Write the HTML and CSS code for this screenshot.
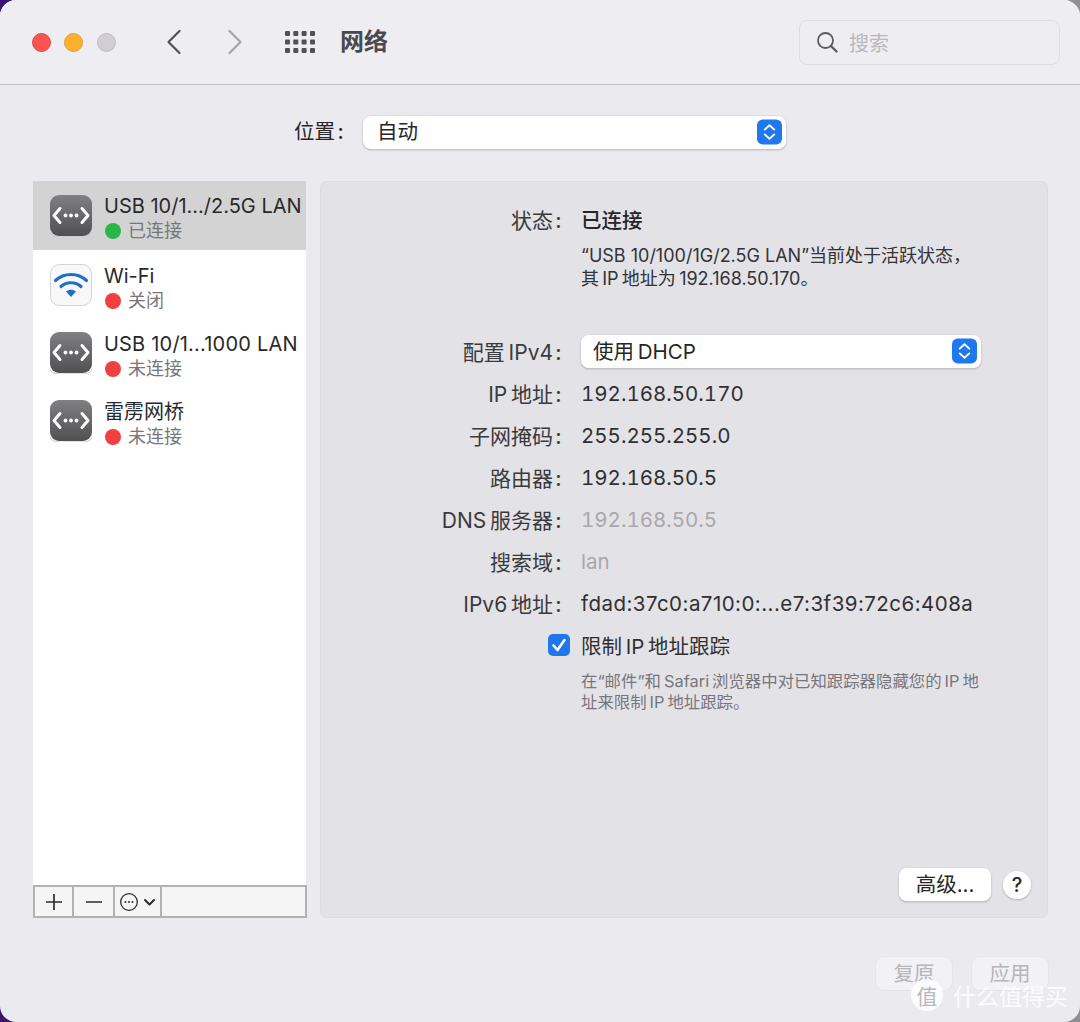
FILE: index.html
```html
<!DOCTYPE html>
<html lang="zh-CN">
<head>
<meta charset="utf-8">
<title>网络</title>
<link rel="stylesheet" href="styles.css">
</head>
<body>
<svg class="defs" width="0" height="0" aria-hidden="true">
  <defs>
    <linearGradient id="netgrad" x1="0" y1="0" x2="0" y2="1"><stop offset="0" stop-color="#808083"/><stop offset="1" stop-color="#505053"/></linearGradient>
    <symbol id="net" viewBox="0 0 42 42">
      <rect x="0" y="0" width="42" height="41" rx="9" fill="url(#netgrad)"/>
      <path d="M0 37a9 5 0 0 0 9 5h24a9 5 0 0 0 9-5" fill="none" stroke="#c9c9cb" stroke-width="1"/>
      <path d="M10 13.500 4 20.500 10 27.500M32 13.500 38 20.500 32 27.500" fill="none" stroke="#fff" stroke-width="3" stroke-linecap="round" stroke-linejoin="round"/>
      <circle cx="15.500" cy="20.500" r="1.900" fill="#fff"/><circle cx="21" cy="20.500" r="1.900" fill="#fff"/><circle cx="26.500" cy="20.500" r="1.900" fill="#fff"/>
    </symbol>
    <symbol id="stepper" viewBox="0 0 26 26">
      <rect width="26" height="26" rx="6" fill="#1f78ee"/>
      <path d="M8 10.500 13 6l5 4.500M8 15.500l5 4.500 5-4.500" fill="none" stroke="#fff" stroke-width="2" stroke-linecap="round" stroke-linejoin="round"/>
    </symbol>
  </defs>
</svg>
<main class="window">
  <header class="toolbar">
    <div class="lights"><span class="light red"></span><span class="light amber"></span><span class="light grey"></span></div>
    <svg class="nav back" width="16" height="26" viewBox="0 0 16 26"><path d="M13.500 2 2.500 13l11 11" fill="none" stroke="#515155" stroke-width="2.200" stroke-linecap="round" stroke-linejoin="round"/></svg>
    <svg class="nav forward" width="16" height="26" viewBox="0 0 16 26"><path d="M2.500 2l11 11-11 11" fill="none" stroke="#a5a5a9" stroke-width="2.200" stroke-linecap="round" stroke-linejoin="round"/></svg>
    <svg class="grid-icon" width="30" height="22" viewBox="0 0 30 22" fill="#505055">
      <rect x="0" y="0" width="5" height="5" rx="1"/><rect x="8.300" y="0" width="5" height="5" rx="1"/><rect x="16.600" y="0" width="5" height="5" rx="1"/><rect x="25" y="0" width="5" height="5" rx="1"/>
      <rect x="0" y="8.500" width="5" height="5" rx="1"/><rect x="8.300" y="8.500" width="5" height="5" rx="1"/><rect x="16.600" y="8.500" width="5" height="5" rx="1"/><rect x="25" y="8.500" width="5" height="5" rx="1"/>
      <rect x="0" y="17" width="5" height="5" rx="1"/><rect x="8.300" y="17" width="5" height="5" rx="1"/><rect x="16.600" y="17" width="5" height="5" rx="1"/><rect x="25" y="17" width="5" height="5" rx="1"/>
    </svg>
    <h1 class="title">网络</h1>
    <div class="search">
      <svg width="22" height="22" viewBox="0 0 22 22"><circle cx="9.500" cy="9.500" r="7.500" fill="none" stroke="#5c5c60" stroke-width="1.800"/><path d="M15 15l5.500 5.500" stroke="#5c5c60" stroke-width="2.400" stroke-linecap="round"/></svg>
      <span>搜索</span>
    </div>
  </header>

  <div class="location">
    <span class="location-label">位置<span class="colon">:</span></span>
    <div class="select location-select"><span class="select-text">自动</span><svg class="stepper"><use href="#stepper"/></svg></div>
  </div>

  <div class="columns">
    <aside class="sidebar">
      <ul class="services">
        <li class="service active">
          <svg class="service-icon"><use href="#net"/></svg>
          <div class="service-text"><div class="service-name">USB 10/1.../2.5G LAN</div><div class="service-status"><i class="dot green"></i>已连接</div></div>
        </li>
        <li class="service">
          <svg class="service-icon" viewBox="0 0 42 42">
            <rect x=".5" y=".5" width="41" height="41" rx="9" fill="#f8f8f9" stroke="#d4d4d6"/>
            <path d="M5.500 16.500C14 8.500 28 8.500 36.500 16.500" fill="none" stroke="#1f6fc9" stroke-width="3.200" stroke-linecap="round"/>
            <path d="M11 22.500c5.500-5 14.500-5 20 0" fill="none" stroke="#1f6fc9" stroke-width="3.200" stroke-linecap="round"/>
            <path d="M16 27.500c3-2.500 7-2.500 10 0L21 33z" fill="#1f6fc9"/>
          </svg>
          <div class="service-text"><div class="service-name">Wi-Fi</div><div class="service-status"><i class="dot red-dot"></i>关闭</div></div>
        </li>
        <li class="service">
          <svg class="service-icon"><use href="#net"/></svg>
          <div class="service-text"><div class="service-name name-wide">USB 10/1...1000 LAN</div><div class="service-status"><i class="dot red-dot"></i>未连接</div></div>
        </li>
        <li class="service">
          <svg class="service-icon"><use href="#net"/></svg>
          <div class="service-text"><div class="service-name">雷雳网桥</div><div class="service-status"><i class="dot red-dot"></i>未连接</div></div>
        </li>
      </ul>
      <div class="list-bar">
        <button class="bar-btn plus"><svg width="18" height="18" viewBox="0 0 18 18"><path d="M9 1v16M1 9h16" stroke="#2b2b2d" stroke-width="1.700"/></svg></button>
        <button class="bar-btn minus"><svg width="18" height="18" viewBox="0 0 18 18"><path d="M1 9h16" stroke="#2b2b2d" stroke-width="1.700"/></svg></button>
        <button class="bar-btn more"><svg width="38" height="20" viewBox="0 0 38 20"><circle cx="10" cy="10" r="8.300" fill="none" stroke="#2b2b2d" stroke-width="1.300"/><circle cx="6.500" cy="10" r="1" fill="#2b2b2d"/><circle cx="10" cy="10" r="1" fill="#2b2b2d"/><circle cx="13.500" cy="10" r="1" fill="#2b2b2d"/><path d="M26 8l4.500 4.500L35 8" fill="none" stroke="#2b2b2d" stroke-width="2" stroke-linecap="round" stroke-linejoin="round"/></svg></button>
        <div class="bar-fill"></div>
      </div>
    </aside>

    <section class="panel">
      <div class="status-row">
        <div class="label">状态<span class="colon">:</span></div>
        <div class="status-value">已连接</div>
      </div>
      <p class="status-desc">“USB 10/100/1G/2.5G LAN”当前处于活跃状态，<br>其&#8201;IP&#8201;地址为&#8201;192.168.50.170。</p>
      <div class="fields">
        <div class="label">配置&#8201;IPv4<span class="colon">:</span></div>
        <div class="select ipv4-select"><span class="select-text">使用&#8201;DHCP</span><svg class="stepper"><use href="#stepper"/></svg></div>
        <div class="label">IP&#8201;地址<span class="colon">:</span></div><div class="value num">192.168.50.170</div>
        <div class="label">子网掩码<span class="colon">:</span></div><div class="value num">255.255.255.0</div>
        <div class="label">路由器<span class="colon">:</span></div><div class="value num">192.168.50.5</div>
        <div class="label">DNS&#8201;服务器<span class="colon">:</span></div><div class="value num muted">192.168.50.5</div>
        <div class="label">搜索域<span class="colon">:</span></div><div class="value muted">lan</div>
        <div class="label">IPv6&#8201;地址<span class="colon">:</span></div><div class="value addr">fdad:37c0:a710:0:...e7:3f39:72c6:408a</div>
        <div class="check-cell"><span class="checkbox"><svg width="22" height="22" viewBox="0 0 22 22"><path d="M5.500 11.500 9.500 16 16.500 6" fill="none" stroke="#fff" stroke-width="2.600" stroke-linecap="round" stroke-linejoin="round"/></svg></span></div>
        <div class="value">限制&#8201;IP&#8201;地址跟踪</div>
      </div>
      <p class="note">在“邮件”和&#8201;Safari&#8201;浏览器中对已知跟踪器隐藏您的&#8201;IP&#8201;地址来限制&#8201;IP&#8201;地址跟踪。</p>
      <div class="panel-actions">
        <button class="btn advanced">高级...</button>
        <button class="help">?</button>
      </div>
    </section>
  </div>

  <footer class="footer">
    <button class="btn disabled">复原</button>
    <button class="btn disabled">应用</button>
  </footer>

  <div class="watermark"><span class="wm-badge">值</span><span>什么值得买</span></div>
</main>
</body>
</html>
```
FILE: styles.css
```css
* { box-sizing: border-box; }
html, body { margin: 0; height: 100%; }
body {
  background: linear-gradient(90deg, #3a1470 0 50%, #8f8f94 50%);
  font-family: "Inter", "Noto Sans CJK SC", sans-serif;
  color: #262628;
  overflow: hidden;
}
.defs { position: absolute; }
.window {
  position: relative;
  width: 1080px;
  height: 1022px;
  background: #ebeaef;
  border-radius: 16px;
  display: flex;
  flex-direction: column;
  overflow: hidden;
}
.toolbar {
  height: 85px;
  flex: none;
  display: flex;
  align-items: center;
  background: #eeedf2;
  border-bottom: 1px solid #c5c3c9;
  padding: 0 20px 0 32px;
}
.lights { display: flex; gap: 13px; }
.light { width: 19px; height: 19px; border-radius: 50%; display: block; }
.grey { margin-left: 1px; }
.red { background: #fb5350; border: 1px solid #e0443f; }
.amber { background: #fdb02e; border: 1px solid #e29b2c; }
.grey { background: #d0ced4; border: 1px solid #bdbbc2; }
.nav { flex: none; }
.back { margin-left: 50px; }
.forward { margin-left: 45px; }
.grid-icon { margin-left: 42px; flex: none; }
.title { margin: 0 0 0 25px; font-size: 24px; font-weight: 700; color: #4a4a4e; line-height: 1; }
.search {
  margin-left: auto;
  width: 261px;
  height: 45px;
  border: 1px solid #dfdde3;
  border-radius: 8px;
  display: flex;
  align-items: center;
  gap: 11px;
  padding-left: 16px;
  color: #b9b8bd;
  font-size: 20px;
}
.location {
  flex: none;
  height: 96px;
  display: flex;
  align-items: center;
  padding: 0 0 2px 294px;
}
.location-label { width: 69px; font-size: 20.500px; line-height: 26px; white-space: nowrap; }
.colon { display: inline-block; width: 11px; text-align: center; font-weight: 500; }
.select {
  display: flex;
  align-items: center;
  justify-content: space-between;
  background: #fff;
  border-radius: 8px;
  box-shadow: 0 0 0 .5px #d6d5da, 0 1px 2px rgba(0,0,0,.3);
  font-size: 20.500px;
  height: 33px;
  padding: 0 4px 0 14px;
}
.select-text { line-height: 26px; margin-bottom: 1px; }
.location-select { width: 423px; }
.ipv4-select { height: 33px; padding-left: 12px; }
.ipv4-select .select-text { margin-bottom: -1px; }
.stepper { width: 25px; height: 26px; flex: none; }
.columns {
  flex: none;
  display: flex;
  height: 737px;
  padding: 0 32px 0 33px;
  gap: 14px;
}
.sidebar {
  width: 273px;
  flex: none;
  display: flex;
  flex-direction: column;
  background: #fff;
}
.services { list-style: none; margin: 0; padding: 0; flex: 1; }
.service {
  height: 68px;
  display: flex;
  align-items: center;
  gap: 12px;
  padding-left: 17px;
}
.service.active { background: #d3d3d4; height: 69px; margin-bottom: 1px; }
.service-icon { width: 42px; height: 42px; flex: none; }
.service-text { min-width: 0; padding-top: 6px; }
.service-name { font-size: 20px; line-height: 25px; white-space: nowrap; color: #29292b; }
.name-wide { letter-spacing: .2px; }
.service-status { font-size: 18px; line-height: 24px; color: #77767b; display: flex; align-items: center; gap: 7px; }
.dot { width: 16px; height: 16px; border-radius: 50%; display: block; flex: none; margin-left: 1px; }
.green { background: #2ab644; }
.red-dot { background: #f04040; }
.list-bar {
  flex: none;
  height: 33px;
  display: flex;
  background: #f5f5f6;
  border: 2px solid #b2b2b4;
  margin: 0 -1px 0 0;
}
.bar-btn {
  background: none;
  border: 0;
  border-right: 2px solid #b2b2b4;
  padding: 0;
  display: flex;
  align-items: center;
  justify-content: center;
}
.plus { width: 39px; }
.minus { width: 41px; }
.more { width: 47px; }
.bar-fill { flex: 1; }
.panel {
  position: relative;
  flex: 1;
  background: #e3e2e7;
  border: 1px solid #dddce1;
  border-radius: 7px;
  padding-top: 24px;
  display: flex;
  flex-direction: column;
}
.label { font-size: 21px; text-align: right; white-space: nowrap; color: #3a3a3d; }
.status-row {
  display: grid;
  grid-template-columns: 243px 1fr;
  column-gap: 17px;
  line-height: 30px;
}
.status-value { font-size: 20.500px; font-weight: 500; color: #262628; }
.status-desc {
  margin: 8px 0 0 260px;
  font-size: 18px;
  line-height: 23px;
  color: #333336;
  white-space: nowrap;
}
.fields {
  margin-top: 40px;
  display: grid;
  grid-template-columns: 243px 400px;
  grid-auto-rows: 42px;
  column-gap: 17px;
  align-items: center;
}
.value { font-size: 20.500px; white-space: nowrap; color: #303033; }
.num { font-feature-settings: "tnum"; }
.addr { letter-spacing: .46px; }
.muted { color: #a9a8ad; }
.check-cell { display: flex; justify-content: flex-end; }
.checkbox {
  width: 22px;
  height: 22px;
  border-radius: 5px;
  background: #2077ec;
  display: block;
  margin-right: -6px;
}
.note {
  margin: 5px 0 0 260px;
  width: 402px;
  font-size: 16.400px;
  line-height: 21px;
  color: #77767b;
}
.panel-actions {
  margin: auto 16px 16px 0;
  display: flex;
  justify-content: flex-end;
  align-items: center;
  gap: 12px;
}
.btn {
  font: inherit;
  font-size: 20.500px;
  color: #262628;
  background: #fff;
  border: 0;
  border-radius: 8px;
  box-shadow: 0 0 0 .5px #d6d5da, 0 1px 2px rgba(0,0,0,.3);
  height: 33px;
  padding: 0 0 3px;
}
.advanced { width: 92px; }
.help {
  font: inherit;
  font-size: 20px;
  font-weight: 500;
  width: 28px;
  height: 28px;
  padding: 0;
  border: 0;
  border-radius: 50%;
  background: #fff;
  box-shadow: 0 0 0 .5px #d6d5da, 0 1px 2px rgba(0,0,0,.3);
  color: #262628;
}
.footer {
  flex: 1;
  display: flex;
  justify-content: flex-end;
  gap: 20px;
  padding: 39px 32px 0 0;
}
.disabled {
  width: 76px;
  background: #f2f1f5;
  color: #b6b5ba;
  box-shadow: 0 0 0 1px #e5e4e9;
}
.watermark {
  position: absolute;
  left: 911px;
  top: 978px;
  display: flex;
  align-items: center;
  gap: 10px;
  font-size: 23px;
  color: rgba(255,255,255,.85);
  white-space: nowrap;
}
.wm-badge {
  width: 32px;
  height: 32px;
  border-radius: 50%;
  background: rgba(255,255,255,.85);
  color: #b8b7bc;
  font-size: 21px;
  display: flex;
  align-items: center;
  justify-content: center;
}
```
